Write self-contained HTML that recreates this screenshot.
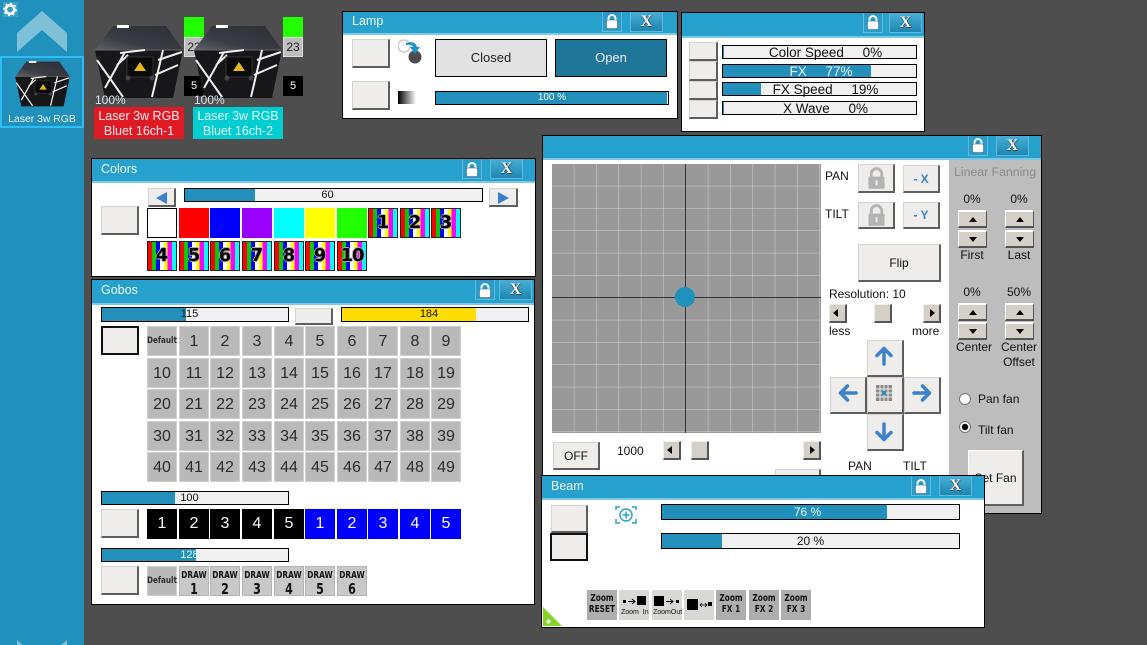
<!DOCTYPE html>
<html><head><meta charset="utf-8"><style>
html,body{margin:0;padding:0}
body{width:1147px;height:645px;overflow:hidden;background:#4e4e4e;position:relative;font-family:"Liberation Sans",sans-serif;color:#111}
body div,body span.a,body svg.a{position:absolute;box-sizing:border-box}
.win{background:#fff;border:1px solid #000}
.tb{background:#26a1ce;border-bottom:2px solid #7cc8e6;color:#f2f8fb;font-size:12.500px;padding-left:9px;line-height:21px}
.lk,.xb{height:20px;border:1px solid #62b8da;border-top:0}
.lk{width:20px;background:#2a9cc8}
.xb{width:33px;background:linear-gradient(#49aed4,#1d87b2);color:#fff;font:bold 16px/19px "Liberation Serif",serif;text-align:center;text-shadow:1px 0 #345,0 1px #345}
.b{background:#eeedeb;border:1px solid #d6d3cd;border-right:2px solid #5e5e5e;border-bottom:2px solid #5e5e5e;border-top-color:#d6d3cd;text-align:center}
.sel{border:2px solid #111;border-top-color:#111;border-left-color:#111}
.bar{background:#f0f0f0;border:1px solid #000;text-align:center;font-size:11px;line-height:12px;white-space:pre;color:#111}
.bar i{position:absolute;left:0;top:0;bottom:0;background:#2290bb}
.bar span{position:relative}
.s{width:30px;height:30px;text-align:center;line-height:29px;font-size:16px}
.g{background:#b9b9b9;border:1px solid #cfcfcf;color:#2b2b2b;width:30px;height:30px}
.rb{background:linear-gradient(90deg,#f00 0 15%,#0c0 15% 29%,#00f 29% 43%,#fff 43% 57%,#ff0 57% 70%,#f0f 70% 85%,#0ff 85%);border:1px solid #222;font:bold 18px/28px "DejaVu Sans",sans-serif;color:#000;text-shadow:1px 0 #aaa,-1px 0 #aaa,0 1px #aaa,0 -1px #aaa}
.c0{left:147px}.c1{left:179px}.c2{left:210px}.c3{left:242px}.c4{left:274px}.c5{left:305px}.c6{left:337px}.c7{left:368px}.c8{left:400px}.c9{left:431px}
.r1{top:326px}.r2{top:358px}.r3{top:389px}.r4{top:421px}.r5{top:452px}
.k{background:#000;color:#fff;top:509px}.u{background:#00f;color:#fff;top:509px}
.dr{background:#c8c8c8;border:1px solid #b4b4b4;top:566px;color:#111;font:bold 10px/11px "DejaVu Sans","Liberation Sans",sans-serif;padding-top:3px;line-height:11px}
.dr b{display:block;font-size:15px;line-height:16px}
.in{display:block;transform:scaleX(.74);transform-origin:50% 50%;margin:0 -6px}
.t{white-space:nowrap;line-height:14px;font-size:12px;color:#111}
.sb{width:18px;height:19px;background:#d4d0c8;border:1px solid #eee;border-right:2px solid #555;border-bottom:2px solid #555}
.sb.l::after,.sb.r::after{content:"";position:absolute;left:6px;top:4px;border:4px solid transparent}
.sb.l::after{left:3px;border-left:0;border-right:5px solid #000}
.sb.r::after{left:6px;border-right:0;border-left:5px solid #000}
.fb{width:29px;height:18px;background:#d4d0c8;border:1px solid #fff;border-top-width:2px;border-right:1px solid #555;border-bottom:2px solid #555}
.fb::after{content:"";position:absolute;left:10px;top:5px;border:4px solid transparent}
.fb.up::after{border-top:0;border-bottom:5px solid #000}
.fb.dn::after{border-bottom:0;border-top:5px solid #000}
.ft{width:48px;text-align:center;font-size:12px;line-height:14px;color:#111}
.zi{top:590px;width:30px;height:30px;background:#aeaeae;font:bold 10px/11px "DejaVu Sans","Liberation Sans",sans-serif;color:#111;text-align:center;padding-top:3px}
.zl{background:#d8d8d4}
</style></head><body>
<svg width="0" height="0" style="position:absolute"><defs>
<linearGradient id="tg" x1="0" y1="1" x2="1" y2="0"><stop offset="0" stop-color="#5f636b"/><stop offset=".35" stop-color="#3a3d44"/><stop offset="1" stop-color="#2b2d33"/></linearGradient>
<symbol id="dev" viewBox="0 0 88 74">
<polygon points="18,1 71,1 88,25 0,25" fill="url(#tg)"/>
<rect x="22" y="0" width="12" height="3" fill="#fff"/>
<polygon points="0,25 88,25 78,73 10,73" fill="#17171a"/>
<path d="M0 25H88" stroke="#666" stroke-width="1"/>
<g stroke="#eee" stroke-width="2" fill="none"><path d="M30 27L10 63M2 35L28 72M68 25L57 72M63 35L87 27M60 50L83 40M22 40L33 30M25 28L50 25"/></g>
<rect x="32" y="32" width="26" height="20" fill="#0a0a0a" stroke="#333"/><polygon points="45,37 51,46 39,46" fill="#e2b81c"/>
<circle cx="33" cy="53" r="2.500" fill="#444"/><circle cx="57" cy="53" r="2.500" fill="#444"/>
</symbol>
<symbol id="lock" viewBox="0 0 20 18"><path d="M6.500 9V6.500a3.500 3.500 0 0 1 7 0V9" fill="none" stroke="#fff" stroke-width="2"/><rect x="4.500" y="8" width="11" height="8.500" rx="1.500" fill="#fff" stroke="#457" stroke-width=".5"/></symbol>
<symbol id="glock" viewBox="0 0 37 28"><path d="M13 13V9a5.500 5.500 0 0 1 11 0v4" fill="none" stroke="#b4b4b4" stroke-width="3"/><rect x="10" y="12" width="17" height="13" rx="1" fill="#b4b4b4"/><rect x="17.500" y="16" width="2" height="5" fill="#eee"/></symbol>
</defs></svg>

<!-- sidebar -->
<div style="left:0;top:0;width:84px;height:645px;background:#2090bd"></div>
<svg class="a" style="left:0;top:0" width="84" height="645">
<rect x="3" y="2" width="15" height="15" fill="#3aa0c8"/>
<circle cx="10" cy="9.500" r="4.200" fill="none" stroke="#fff" stroke-width="2.500"/><circle cx="10" cy="9.500" r="5.800" fill="none" stroke="#fff" stroke-width="2" stroke-dasharray="2 2.500"/>
<polygon points="42,11 17,33 17,52 42,30 67,52 67,33" fill="#7fc0d9"/>
<polygon points="17,640 42,662 67,640 67,662 17,662" fill="#7fc0d9"/>
</svg>
<div style="left:0;top:56px;width:84px;height:72px;border:2px solid #2dbdf2"></div>
<svg class="a" style="left:13px;top:61px" width="59" height="46"><use href="#dev"/></svg>
<div style="left:2px;top:112px;width:80px;text-align:center;color:#f0f6fa;font-size:10.400px;line-height:14px;padding-top:0;margin-top:1px">Laser 3w RGB</div>

<!-- fixtures -->
<div style="left:184px;top:17px;width:20px;height:20px;background:#2f0"></div>
<div style="left:184px;top:37px;width:20px;height:20px;background:#bdbdbd;border:1px solid #ddd;font-size:12px;line-height:19px;text-align:center;color:#222">23</div>
<div style="left:184px;top:76px;width:20px;height:20px;background:#000;color:#fff;font-size:11px;line-height:20px;text-align:center">5</div>
<svg class="a" style="left:95px;top:25px" width="88" height="74"><use href="#dev"/></svg>
<div style="left:95px;top:93px;color:#dcebf5;font-size:12px;line-height:14px">100%</div>
<div style="left:94px;top:107px;width:90px;height:32px;background:#e01a25;color:#fbeef0;font-size:12.500px;line-height:15px;text-align:center;padding-top:2px">Laser 3w RGB<br>Bluet 16ch-1</div>
<svg class="a" style="left:194px;top:25px" width="88" height="74"><use href="#dev"/></svg>
<div style="left:283px;top:17px;width:20px;height:20px;background:#2f0"></div>
<div style="left:283px;top:37px;width:20px;height:20px;background:#bdbdbd;border:1px solid #ddd;font-size:12px;line-height:19px;text-align:center;color:#222">23</div>
<div style="left:283px;top:76px;width:20px;height:20px;background:#000;color:#fff;font-size:11px;line-height:20px;text-align:center">5</div>
<div style="left:194px;top:93px;color:#dcebf5;font-size:12px;line-height:14px">100%</div>
<div style="left:193px;top:107px;width:90px;height:32px;background:#00cdd2;color:#e6fbfb;font-size:12.500px;line-height:15px;text-align:center;padding-top:2px">Laser 3w RGB<br>Bluet 16ch-2</div>

<!-- lamp -->
<div class="win" style="left:342px;top:11px;width:336px;height:108px"></div>
<div class="tb" style="left:343px;top:12px;width:334px;height:23px;line-height:19px">Lamp</div>
<div class="lk" style="left:602px;top:12px"><svg class="a" style="left:-1px;top:0" width="20" height="18"><use href="#lock"/></svg></div>
<div class="xb" style="left:630px;top:12px">X</div>
<div class="b" style="left:352px;top:39px;width:38px;height:29px"></div>
<div class="b" style="left:352px;top:81px;width:38px;height:29px"></div>
<svg class="a" style="left:398px;top:38px" width="26" height="26"><circle cx="6" cy="8" r="6" fill="#fff" stroke="#ccc" stroke-width="1.500"/><circle cx="17" cy="19" r="6.500" fill="#4c4c4c"/><path d="M8 5q9-3 11 4h3l-5 7-5-7h3q-1-3-7-2z" fill="#1f93c4"/></svg>
<div style="left:435px;top:39px;width:112px;height:38px;background:#e2e2e2;border:1px solid #000;text-align:center;font-size:13px;line-height:36px;color:#222">Closed</div>
<div style="left:555px;top:39px;width:112px;height:38px;background:#1f7699;border:1px solid #000;text-align:center;font-size:13px;line-height:36px;color:#eef">Open</div>
<div style="left:398px;top:91px;width:18px;height:13px;background:linear-gradient(90deg,#000,#fff)"></div>
<div class="bar" style="left:435px;top:91px;width:234px;height:14px;color:#fff;font-size:10px"><i style="width:231px"></i><span>100 %</span></div>

<!-- fx -->
<div class="win" style="left:681px;top:12px;width:244px;height:120px"></div>
<div class="tb" style="left:682px;top:13px;width:242px;height:25px"></div>
<div class="lk" style="left:863px;top:13px"><svg class="a" style="left:-1px;top:0" width="20" height="18"><use href="#lock"/></svg></div>
<div class="xb" style="left:889px;top:13px">X</div>
<div class="b" style="left:689px;top:42px;width:29px;height:19px"></div>
<div class="b" style="left:689px;top:61px;width:29px;height:20px"></div>
<div class="b" style="left:689px;top:81px;width:29px;height:19px"></div>
<div class="b" style="left:689px;top:100px;width:29px;height:19px"></div>
<div class="bar" style="left:722px;top:45px;width:195px;height:14px;font-size:13.500px;line-height:14px;padding-left:12px"><i style="width:1px"></i><span>Color Speed     0%</span></div>
<div class="bar" style="left:722px;top:64px;width:195px;height:14px;font-size:13.500px;line-height:14px;color:#e8f4f8;padding-left:3px"><i style="width:148px"></i><span>FX     77%</span></div>
<div class="bar" style="left:722px;top:82px;width:195px;height:14px;font-size:13.500px;line-height:14px;padding-left:12px"><i style="width:38px"></i><span>FX Speed     19%</span></div>
<div class="bar" style="left:722px;top:101px;width:195px;height:14px;font-size:13.500px;line-height:14px;padding-left:12px"><i style="width:1px"></i><span>X Wave     0%</span></div>

<!-- colors -->
<div class="win" style="left:91px;top:158px;width:445px;height:119px"></div>
<div class="tb" style="left:92px;top:159px;width:443px;height:24px">Colors</div>
<div class="lk" style="left:462px;top:159px"><svg class="a" style="left:-1px;top:1px" width="20" height="18"><use href="#lock"/></svg></div>
<div class="xb" style="left:490px;top:159px">X</div>
<div class="b" style="left:101px;top:206px;width:38px;height:29px"></div>
<div class="b" style="left:148px;top:188px;width:28px;height:19px"><svg class="a" style="left:7px;top:3px" width="12" height="12"><polygon points="0,6 11,0 11,12" fill="#3b7fcb"/></svg></div>
<div class="bar" style="left:184px;top:188px;width:299px;height:14px;padding-right:12px"><i style="width:70px"></i><span>60</span></div>
<div class="b" style="left:489px;top:188px;width:29px;height:19px"><svg class="a" style="left:8px;top:3px" width="12" height="12"><polygon points="11,6 0,0 0,12" fill="#3b7fcb"/></svg></div>
<div class="s c0" style="top:208px;background:#fff;border:1px solid #000"></div>
<div class="s c1" style="top:208px;background:#f00"></div>
<div class="s c2" style="top:208px;background:#00f"></div>
<div class="s c3" style="top:208px;background:#90f"></div>
<div class="s c4" style="top:208px;background:#0ff"></div>
<div class="s c5" style="top:208px;background:#ff0"></div>
<div class="s c6" style="top:208px;background:#2f0"></div>
<div class="s rb c7" style="top:208px">1</div>
<div class="s rb c8" style="top:208px">2</div>
<div class="s rb c9" style="top:208px">3</div>
<div class="s rb c0" style="top:241px">4</div>
<div class="s rb c1" style="top:241px">5</div>
<div class="s rb c2" style="top:241px">6</div>
<div class="s rb c3" style="top:241px">7</div>
<div class="s rb c4" style="top:241px">8</div>
<div class="s rb c5" style="top:241px">9</div>
<div class="s rb c6" style="top:241px;letter-spacing:-1px">10</div>

<!-- gobos -->
<div class="win" style="left:91px;top:279px;width:444px;height:326px"></div>
<div class="tb" style="left:92px;top:280px;width:442px;height:25px">Gobos</div>
<div class="lk" style="left:475px;top:280px"><svg class="a" style="left:-1px;top:1px" width="20" height="18"><use href="#lock"/></svg></div>
<div class="xb" style="left:499px;top:280px">X</div>
<div class="bar" style="left:101px;top:307px;width:188px;height:15px;padding-right:11px"><i style="width:84px"></i><span>115</span></div>
<div class="b" style="left:295px;top:308px;width:38px;height:17px"></div>
<div class="bar" style="left:341px;top:307px;width:188px;height:15px;padding-right:12px"><i style="width:134px;background:#fd0"></i><span>184</span></div>
<div class="b sel" style="left:101px;top:326px;width:38px;height:29px"></div>
<div class="s g c0 r1" style="font:bold 9px/28px 'DejaVu Sans','Liberation Sans',sans-serif"><span class="in" style="transform:scaleX(.8)">Default</span></div>
<div class="s g c1 r1">1</div><div class="s g c2 r1">2</div><div class="s g c3 r1">3</div><div class="s g c4 r1">4</div><div class="s g c5 r1">5</div><div class="s g c6 r1">6</div><div class="s g c7 r1">7</div><div class="s g c8 r1">8</div><div class="s g c9 r1">9</div>
<div class="s g c0 r2">10</div><div class="s g c1 r2">11</div><div class="s g c2 r2">12</div><div class="s g c3 r2">13</div><div class="s g c4 r2">14</div><div class="s g c5 r2">15</div><div class="s g c6 r2">16</div><div class="s g c7 r2">17</div><div class="s g c8 r2">18</div><div class="s g c9 r2">19</div>
<div class="s g c0 r3">20</div><div class="s g c1 r3">21</div><div class="s g c2 r3">22</div><div class="s g c3 r3">23</div><div class="s g c4 r3">24</div><div class="s g c5 r3">25</div><div class="s g c6 r3">26</div><div class="s g c7 r3">27</div><div class="s g c8 r3">28</div><div class="s g c9 r3">29</div>
<div class="s g c0 r4">30</div><div class="s g c1 r4">31</div><div class="s g c2 r4">32</div><div class="s g c3 r4">33</div><div class="s g c4 r4">34</div><div class="s g c5 r4">35</div><div class="s g c6 r4">36</div><div class="s g c7 r4">37</div><div class="s g c8 r4">38</div><div class="s g c9 r4">39</div>
<div class="s g c0 r5">40</div><div class="s g c1 r5">41</div><div class="s g c2 r5">42</div><div class="s g c3 r5">43</div><div class="s g c4 r5">44</div><div class="s g c5 r5">45</div><div class="s g c6 r5">46</div><div class="s g c7 r5">47</div><div class="s g c8 r5">48</div><div class="s g c9 r5">49</div>
<div class="bar" style="left:101px;top:491px;width:188px;height:14px;padding-right:11px"><i style="width:73px"></i><span>100</span></div>
<div class="b" style="left:101px;top:509px;width:38px;height:29px"></div>
<div class="s k c0">1</div><div class="s k c1">2</div><div class="s k c2">3</div><div class="s k c3">4</div><div class="s k c4">5</div>
<div class="s u c5">1</div><div class="s u c6">2</div><div class="s u c7">3</div><div class="s u c8">4</div><div class="s u c9">5</div>
<div class="bar" style="left:101px;top:548px;width:188px;height:14px;color:#dff;padding-right:11px"><i style="width:94px"></i><span>128</span></div>
<div class="b" style="left:101px;top:566px;width:38px;height:29px"></div>
<div class="s g c0" style="top:566px;font:bold 9px/28px 'DejaVu Sans','Liberation Sans',sans-serif"><span class="in" style="transform:scaleX(.8)">Default</span></div>
<div class="s dr c1"><span class="in">DRAW<b>1</b></span></div><div class="s dr c2"><span class="in">DRAW<b>2</b></span></div><div class="s dr c3"><span class="in">DRAW<b>3</b></span></div><div class="s dr c4"><span class="in">DRAW<b>4</b></span></div><div class="s dr c5"><span class="in">DRAW<b>5</b></span></div><div class="s dr c6"><span class="in">DRAW<b>6</b></span></div>

<!-- xy -->
<div class="win" style="left:542px;top:135px;width:500px;height:379px"></div>
<div class="tb" style="left:543px;top:136px;width:498px;height:24px"></div>
<div class="lk" style="left:968px;top:136px"><svg class="a" style="left:-1px;top:0" width="20" height="18"><use href="#lock"/></svg></div>
<div class="xb" style="left:996px;top:136px">X</div>
<svg class="a" style="left:552px;top:164px" width="269" height="269">
<defs><pattern id="gp" width="22.330" height="22.330" patternUnits="userSpaceOnUse"><path d="M22.330 0V22.330M0 22.330H22.330" stroke="#cfcfcf" stroke-width="1" fill="none"/></pattern></defs>
<rect width="269" height="269" fill="#999"/><rect width="269" height="269" fill="url(#gp)"/>
<path d="M133.500 0V269M0 133.500H269" stroke="#333" stroke-width="1"/>
<circle cx="133" cy="133" r="10" fill="#2090bd"/></svg>
<div class="t" style="left:825px;top:169px">PAN</div>
<div class="b" style="left:858px;top:164px;width:37px;height:29px"><svg class="a" style="left:0;top:0" width="35" height="27"><use href="#glock"/></svg></div>
<div class="b" style="left:903px;top:165px;width:37px;height:28px;color:#3b82c9;font:bold 12px/26px 'Liberation Sans',sans-serif">- X</div>
<div class="t" style="left:825px;top:207px">TILT</div>
<div class="b" style="left:858px;top:202px;width:37px;height:27px"><svg class="a" style="left:0;top:-1px" width="35" height="27"><use href="#glock"/></svg></div>
<div class="b" style="left:903px;top:202px;width:37px;height:27px;color:#3b82c9;font:bold 12px/25px 'Liberation Sans',sans-serif">- Y</div>
<div class="b" style="left:858px;top:244px;width:83px;height:38px;font-size:12px;line-height:36px;color:#111">Flip</div>
<div class="t" style="left:829px;top:287px">Resolution: 10</div>
<div class="sb l" style="left:829px;top:304px"></div>
<div class="sb" style="left:874px;top:304px"></div>
<div class="sb r" style="left:923px;top:304px"></div>
<div class="t" style="left:829px;top:324px">less</div>
<div class="t" style="left:912px;top:324px">more</div>
<div class="b" style="left:867px;top:340px;width:37px;height:37px"><svg class="a" style="left:4px;top:3px" width="24" height="24"><path d="M12 20V5M5 11.500l7-7 7 7" fill="none" stroke="#3b82c9" stroke-width="3.500" stroke-linecap="round" stroke-linejoin="round"/></svg></div>
<div class="b" style="left:830px;top:377px;width:37px;height:37px"><svg class="a" style="left:5px;top:3px" width="24" height="24"><path d="M20 12H5M11.500 5l-7 7 7 7" fill="none" stroke="#3b82c9" stroke-width="3.500" stroke-linecap="round" stroke-linejoin="round"/></svg></div>
<div class="b" style="left:867px;top:377px;width:37px;height:37px"><svg class="a" style="left:8px;top:7px" width="18" height="18"><rect width="16" height="16" fill="#8a8a8a"/><path d="M4 0V16M8 0V16M12 0V16M0 4H16M0 8H16M0 12H16" stroke="#eee" stroke-width="1"/><circle cx="8" cy="8" r="2" fill="#1f8fe0"/></svg></div>
<div class="b" style="left:904px;top:377px;width:37px;height:37px"><svg class="a" style="left:5px;top:3px" width="24" height="24"><path d="M4 12H19M12.500 5l7 7-7 7" fill="none" stroke="#3b82c9" stroke-width="3.500" stroke-linecap="round" stroke-linejoin="round"/></svg></div>
<div class="b" style="left:867px;top:414px;width:37px;height:37px"><svg class="a" style="left:4px;top:5px" width="24" height="24"><path d="M12 4V19M5 12.500l7 7 7-7" fill="none" stroke="#3b82c9" stroke-width="3.500" stroke-linecap="round" stroke-linejoin="round"/></svg></div>
<div class="t" style="left:848px;top:459px">PAN</div>
<div class="t" style="left:903px;top:459px">TILT</div>
<div class="b" style="left:553px;top:442px;width:47px;height:28px;font-size:12px;line-height:26px;color:#111">OFF</div>
<div class="t" style="left:617px;top:444px">1000</div>
<div class="sb l" style="left:663px;top:441px"></div>
<div class="sb" style="left:691px;top:441px"></div>
<div class="sb r" style="left:803px;top:441px"></div>
<div class="b" style="left:775px;top:469px;width:46px;height:20px"></div>
<!-- fan -->
<div style="left:949px;top:160px;width:92px;height:353px;background:#bdbdbd"></div>
<div class="t" style="left:954px;top:165px;color:#8a8a8a;font-size:12.300px">Linear Fanning</div>
<div class="ft" style="left:948px;top:192px">0%</div><div class="ft" style="left:995px;top:192px">0%</div>
<div class="fb up" style="left:958px;top:210px"></div><div class="fb up" style="left:1005px;top:210px"></div>
<div class="fb dn" style="left:958px;top:230px"></div><div class="fb dn" style="left:1005px;top:230px"></div>
<div class="ft" style="left:948px;top:248px">First</div><div class="ft" style="left:995px;top:248px">Last</div>
<div class="ft" style="left:948px;top:285px">0%</div><div class="ft" style="left:995px;top:285px">50%</div>
<div class="fb up" style="left:958px;top:303px"></div><div class="fb up" style="left:1005px;top:303px"></div>
<div class="fb dn" style="left:958px;top:322px"></div><div class="fb dn" style="left:1005px;top:322px"></div>
<div class="ft" style="left:950px;top:340px">Center</div><div class="ft" style="left:995px;top:340px">Center<br><span style="line-height:16px">Offset</span></div>
<svg class="a" style="left:958px;top:392px" width="14" height="42"><circle cx="7" cy="7" r="5.500" fill="#fff" stroke="#777"/><circle cx="7" cy="35" r="5.500" fill="#fff" stroke="#777"/><circle cx="7" cy="35" r="3.200" fill="#000"/></svg>
<div class="t" style="left:978px;top:392px">Pan fan</div>
<div class="t" style="left:978px;top:423px">Tilt fan</div>
<div class="b" style="left:968px;top:450px;width:56px;height:56px;font-size:12px;line-height:54px;color:#111;border-color:#fff #5e5e5e #5e5e5e #fff">Set Fan</div>

<!-- beam -->
<div class="win" style="left:541px;top:475px;width:444px;height:153px"></div>
<div class="tb" style="left:542px;top:476px;width:442px;height:24px">Beam</div>
<div class="lk" style="left:911px;top:476px"><svg class="a" style="left:-1px;top:1px" width="20" height="18"><use href="#lock"/></svg></div>
<div class="xb" style="left:939px;top:476px">X</div>
<div class="b" style="left:551px;top:505px;width:37px;height:28px"></div>
<div class="b sel" style="left:550px;top:533px;width:38px;height:28px"></div>
<svg class="a" style="left:615px;top:505px" width="23" height="20"><path d="M1 5V2H5M17 2H21V5M1 14V18H5M17 18H21V14" fill="none" stroke="#2b9fc9" stroke-width="1.500"/><circle cx="11" cy="10" r="6" fill="none" stroke="#2b9fc9" stroke-width="1.500"/><path d="M11 6.500V13.500M7.500 10H14.500" stroke="#2b9fc9" stroke-width="1.500"/></svg>
<div class="bar" style="left:661px;top:504px;width:299px;height:16px;font-size:12px;line-height:14px;color:#eaf6fa;padding-right:6px"><i style="width:225px"></i><span>76 %</span></div>
<div class="bar" style="left:661px;top:533px;width:299px;height:16px;font-size:12px;line-height:14px"><i style="width:60px"></i><span>20 %</span></div>
<div class="zi" style="left:587px"><span class="in">Zoom<br>RESET</span></div>
<div class="zi zl" style="left:619px"><svg class="a" style="left:4px;top:5px" width="24" height="12"><rect x="0" y="5" width="3" height="3"/><path d="M5 6.500H12M9 4l3 2.500-3 2.500" fill="none" stroke="#000"/><rect x="14" y="1" width="9" height="9"/></svg><span class="a" style="left:2px;top:19px;font:7px/8px 'Liberation Sans',sans-serif;white-space:nowrap">Zoom&nbsp;&nbsp;In</span></div>
<div class="zi zl" style="left:652px"><svg class="a" style="left:2px;top:5px" width="26" height="12"><rect x="0" y="1" width="10" height="10"/><path d="M12 6.500H19M16 4l3 2.500-3 2.500" fill="none" stroke="#000"/><rect x="22" y="5" width="3" height="3"/></svg><span class="a" style="left:1px;top:19px;font:7px/8px 'Liberation Sans',sans-serif;white-space:nowrap">ZoomOut</span></div>
<div class="zi zl" style="left:684px"><svg class="a" style="left:3px;top:9px" width="26" height="12"><rect x="0" y="0" width="11" height="11"/><path d="M13 6H20M15 4l-2 2 2 2M18 4l2 2-2 2" fill="none" stroke="#000" stroke-width=".8"/><rect x="21" y="3" width="4" height="4"/></svg></div>
<div class="zi" style="left:716px"><span class="in">Zoom<br>FX 1</span></div>
<div class="zi" style="left:749px"><span class="in">Zoom<br>FX 2</span></div>
<div class="zi" style="left:781px"><span class="in">Zoom<br>FX 3</span></div>
<svg class="a" style="left:542px;top:606px" width="21" height="21"><polygon points="1,1 20,20 1,20" fill="#86d32a"/><path d="M4 15.500H9M6.500 13V18" stroke="#fff" stroke-width="1.500"/></svg>
</body></html>
